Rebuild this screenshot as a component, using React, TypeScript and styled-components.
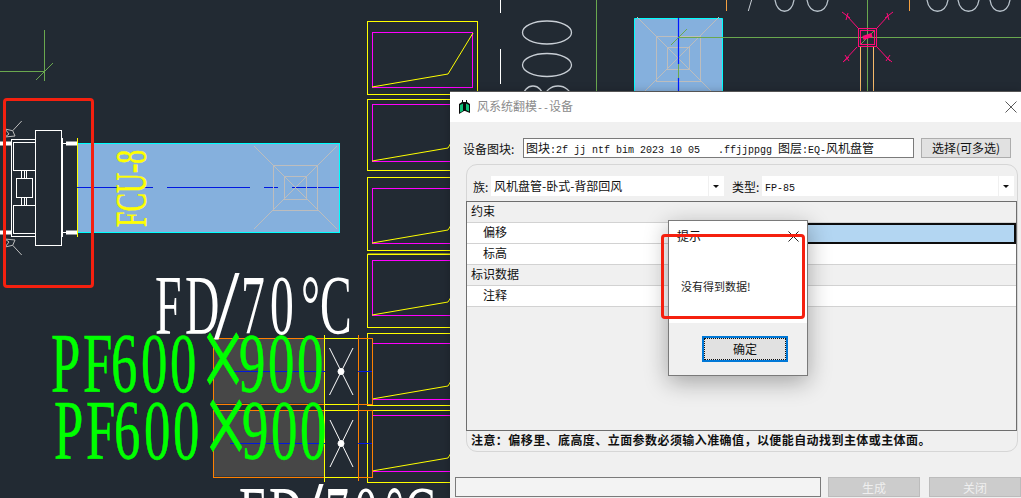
import React from "react";
import styled, { createGlobalStyle } from "styled-components";

const CJK = `"Noto Sans CJK SC", "Liberation Sans", sans-serif`;

const Global = createGlobalStyle`
  html, body { margin: 0; padding: 0; background: #222a33; overflow: hidden; }
  body { font-family: ${CJK}; font-size: 12px; color: #111; }
`;

const Stage = styled.div`
  position: relative;
  width: 1021px;
  height: 498px;
  overflow: hidden;
  background: #222a33;
`;
const Canvas = styled.svg`
  position: absolute;
  inset: 0;
  display: block;
`;
const Win = styled.div`
  position: absolute;
  left: 450px;
  top: 92px;
  width: 571px;
  height: 406px;
  background: #f0f0f0;
  overflow: hidden;
  box-shadow: 0 -1px 0 #555, 0 0 9px rgba(0, 0, 0, 0.25);
`;
const TitleBar = styled.div`
  display: flex;
  align-items: center;
  height: 30px;
  padding: 0 4px 0 9px;
  background: #fff;
`;
const Title = styled.span`
  margin-left: 7px;
  flex: 1;
  color: #8c8c8c;
  font-size: 12px;
  line-height: 30px;
  white-space: pre;
`;
const CloseMark = styled.svg<{ $size: number }>`
  width: ${(p) => p.$size}px;
  height: ${(p) => p.$size}px;
  display: block;
  flex: none;
`;
const DeviceRow = styled.div`
  display: flex;
  align-items: center;
  height: 20px;
  margin-top: 16px;
  padding-left: 13px;
`;
const FieldLabel = styled.span`
  width: 60px;
  flex: none;
  white-space: pre;
  line-height: 19px;
`;
const Sunken = styled.div`
  box-sizing: border-box;
  width: 391px;
  flex: none;
  height: 20px;
  padding-left: 2px;
  border: 1px solid #7a7a7a;
  background: #fff;
  line-height: 17px;
  white-space: pre;
  overflow: hidden;
`;
const Mono = styled.span`
  font-family: "Liberation Mono", monospace;
  font-size: 10px;
`;
const PickButton = styled.div`
  box-sizing: border-box;
  width: 90px;
  flex: none;
  height: 20px;
  margin-left: 7px;
  border: 1px solid #adadad;
  background: #e1e1e1;
  text-align: center;
  line-height: 17px;
`;
const Group = styled.div`
  box-sizing: border-box;
  width: 552px;
  height: 288px;
  margin: 6px 0 0 16px;
  border: 1px solid #d6d6d6;
  border-radius: 11px;
`;
const ComboRow = styled.div`
  display: flex;
  align-items: center;
  height: 20px;
  margin-top: 11px;
  padding-left: 6px;
`;
const ComboLabel = styled.span<{ $w: number }>`
  width: ${(p) => p.$w}px;
  flex: none;
  line-height: 19px;
`;
const Combo = styled.div<{ $w: number; $gap: number }>`
  position: relative;
  box-sizing: border-box;
  width: ${(p) => p.$w}px;
  flex: none;
  height: 20px;
  margin-right: ${(p) => p.$gap}px;
  padding-left: 3px;
  background: #fff;
  line-height: 19px;
  white-space: pre;
  &::after {
    content: "";
    position: absolute;
    right: 5px;
    top: 9px;
    border-left: 3px solid transparent;
    border-right: 3px solid transparent;
    border-top: 3px solid #111;
  }
  &::before {
    content: "";
    position: absolute;
    right: 15px;
    top: 0;
    bottom: 0;
    width: 1px;
    background: #f0f0f0;
  }
`;
const Grid = styled.div`
  box-sizing: border-box;
  width: 551px;
  height: 230px;
  margin: 5px 0 0 -1px;
  border: 1px solid #6e6e6e;
`;
const Row = styled.div<{ $section?: boolean }>`
  display: grid;
  grid-template-columns: 210px 1fr;
  box-sizing: border-box;
  height: 21px;
  border-bottom: 1px solid #d2d2d2;
  background: ${(p) => (p.$section ? "#f0f0f0" : "#fff")};
`;
const RowName = styled.div<{ $section?: boolean }>`
  padding-left: ${(p) => (p.$section ? 4 : 16)}px;
  line-height: 18px;
`;
const RowValue = styled.div<{ $selected?: boolean }>`
  box-sizing: border-box;
  height: ${(p) => (p.$selected ? "21px" : "auto")};
  border: ${(p) => (p.$selected ? "2px solid #0c0c0c" : "none")};
  background: ${(p) => (p.$selected ? "#b3d6f2" : "transparent")};
`;
const Note = styled.div`
  height: 21px;
  padding-left: 4px;
  font-weight: 700;
  line-height: 18px;
  letter-spacing: 0.43px;
  white-space: pre;
`;
const Footer = styled.div`
  display: flex;
  align-items: stretch;
  height: 20px;
  margin-top: 25px;
  padding-left: 5px;
`;
const Status = styled.div`
  box-sizing: border-box;
  width: 366px;
  flex: none;
  margin-right: 7px;
  border: 1px solid #7a7a7a;
  background: #f3f3f3;
`;
const Disabled = styled.div`
  box-sizing: border-box;
  flex: none;
  width: 92px;
  margin-right: 9px;
  border: 1px solid #bcbcbc;
  background: #cccccc;
  color: #efefef;
  text-align: center;
  line-height: 19px;
`;
const MsgBox = styled.div`
  position: absolute;
  left: 668px;
  top: 220px;
  box-sizing: border-box;
  width: 140px;
  height: 156px;
  display: flex;
  flex-direction: column;
  border: 1px solid #7a7a7a;
  background: #f0f0f0;
  box-shadow: 0 6px 22px rgba(0, 0, 0, 0.32);
`;
const MsgBody = styled.div`
  height: 102px;
  flex: none;
  background: #fff;
`;
const MsgTitle = styled.div`
  display: flex;
  align-items: center;
  justify-content: space-between;
  height: 30px;
  padding: 0 8px;
  line-height: 30px;
`;
const MsgText = styled.div`
  margin-top: 25px;
  padding-left: 12px;
  font-size: 11px;
  line-height: 20px;
  color: #222;
`;
const OkButton = styled.div`
  box-sizing: border-box;
  width: 86px;
  height: 26px;
  margin: 13px 0 0 33px;
  border: 2px solid #0078d7;
  background: #e1e1e1;
  outline: 1px dotted #111;
  outline-offset: -3px;
  text-align: center;
  line-height: 22px;
`;
const RedMark = styled.div<{ $x: number; $y: number; $w: number; $h: number }>`
  position: absolute;
  left: ${(p) => p.$x}px;
  top: ${(p) => p.$y}px;
  width: ${(p) => p.$w}px;
  height: ${(p) => p.$h}px;
  box-sizing: border-box;
  border: 3px solid #f5200f;
  border-radius: 4px;
`;

const X = ({ size, color }: { size: number; color: string }) => (
  <CloseMark $size={size} viewBox="0 0 12 12">
    <path d="M0.5 0.5 L11.5 11.5 M11.5 0.5 L0.5 11.5" stroke={color} strokeWidth="1" fill="none" />
  </CloseMark>
);

const AppIcon = () => (
  <svg width="11" height="15" viewBox="0 0 11 15" style={{ flex: "none" }}>
    <path d="M3 2 V0 H4 V2 H7 V0 H8 V2 L11 4 V13 L6 11 L5 11 L0 14 V4 Z" fill="#0a0a0a" />
    <path d="M1 5 L4 3.5 V11 L1 12.5 Z" fill="#10c078" />
    <path d="M7 3.5 L10 5 V11.5 L7 10 Z" fill="#10c078" />
  </svg>
);

const Y = "#ffff00";
const M = "#ff00ff";
const O = "#ff8000";
const G = "#6aa84f";
const B = "#0018e0";
const GR = "#bdbdbd";
const P = "#ff0a78";
const W = "#ffffff";

const CadText = styled.text`
  font-family: "Liberation Serif", serif;
`;

/* One run of stretched CAD lettering: every glyph has its own x in page pixels. */
const Lettering = ({
  base,
  squeeze,
  fill,
  stroke,
  size = 85,
  t,
  x,
}: {
  base: number;
  squeeze: number;
  fill: string;
  stroke?: number;
  size?: number;
  t: string;
  x: number[];
}) => (
  <CadText
    transform={`translate(0 ${base}) scale(${squeeze} 1)`}
    x={x.map((v) => (v / squeeze).toFixed(1)).join(" ")}
    y="0"
    fontSize={size}
    fill={fill}
    stroke={stroke ? fill : "none"}
    strokeWidth={stroke ?? 0}
  >
    {t}
  </CadText>
);

const panels: [number, number, number, number, number][] = [
  [21, 94, 32, 87, 74],
  [99, 170, 104, 161, 148],
  [177, 250, 188, 243, 230],
  [254, 327, 260, 315, 302],
  [333, 405, 343, 399, 386],
  [410, 482, 415, 471, 458],
];

const FdLabel = ({ dx, base }: { dx: number; base: number }) => (
  <>
    <Lettering base={base} squeeze={0.56} fill={W} t="FD" x={[155 + dx, 185 + dx]} />
    <Lettering base={base + 4} squeeze={0.92} size={100} fill={W} t="/" x={[214 + dx]} />
    <Lettering base={base} squeeze={0.56} fill={W} t="70" x={[241 + dx, 270 + dx]} />
    <Lettering base={base} squeeze={0.56} fill={W} t="°C" x={[301 + dx, 320 + dx]} />
  </>
);

const GreenLabel = ({ dx, base }: { dx: number; base: number }) => (
  <>
    <Lettering base={base} squeeze={0.62} stroke={0.7} fill="#00ff00" t="PF600" x={[51 + dx, 83 + dx, 111 + dx, 141 + dx, 170 + dx]} />
    <Lettering base={base + 9} squeeze={0.62} stroke={0.7} size={126} fill="#00ff00" t="×" x={[201 + dx]} />
    <Lettering base={base} squeeze={0.62} stroke={0.7} fill="#00ff00" t="900" x={[239 + dx, 268 + dx, 297 + dx]} />
  </>
);

const Cad = () => (
  <Canvas width="1021" height="498" viewBox="0 0 1021 498">
    <g fill="none" strokeWidth="1">
      {/* green cross */}
      <path d="M44.5 30 V81 M0 71.5 H44.5 M36 80 L53 63" stroke={G} />
      {/* fan coil body */}
      <rect x="77.5" y="143.5" width="262" height="89" fill="#85b0dd" stroke="#00ffff" />
      <path d="M77.5 138 V237" stroke={Y} />
      <path d="M77 187.5 H125 M139 187.5 H153 M167 187.5 H250 M264 187.5 H278 M292 187.5 H339" stroke={B} />
      <g stroke={GR}>
        <rect x="273.5" y="165.5" width="44" height="45" />
        <rect x="284.5" y="176.5" width="22" height="23" />
        <path d="M254 146 L337 229 M337 146 L254 229" />
      </g>
      {/* device */}
      <g stroke={W}>
        <rect x="35.5" y="130.5" width="26" height="115" />
        <rect x="11.5" y="139.5" width="24" height="97" />
        <rect x="13.5" y="142.5" width="22" height="28" />
        <rect x="13.5" y="205.5" width="22" height="28" />
        <rect x="16.5" y="178.5" width="16" height="19" />
        <path d="M21.5 171 V178 M24.5 171 V178 M26.5 171 V178 M21.5 198 V205 M24.5 198 V205 M26.5 198 V205" />
        <path d="M62.5 138 V237 M62 143.5 H66 M62 232.5 H66" />
        <path d="M0 143.5 H11 M0 232.5 H11 M66 143.5 H77 M66 232.5 H77" strokeWidth="4" />
      </g>
      <g stroke={GR}>
        <path d="M21.7 121 L12.7 130.7 L5 129 L9 134 L5 137 L15 136 L12.7 130.7" />
        <path d="M21.7 255 L12.7 245.3 L5 247 L9 242 L5 239 L15 240 L12.7 245.3" />
      </g>
      {/* column of panels */}
      {panels.map(([a, b, c, d, e], i) => (
        <g key={i}>
          <rect x="367.5" y={a + 0.5} width="110" height={b - a} stroke={Y} />
          <rect x="372.5" y={c + 0.5} width="100" height={d - c} stroke={M} />
          <path d={`M372 ${d} L448 ${e} L473 ${c + 1}`} stroke={Y} />
        </g>
      ))}
      <path d="M367.5 94.5 H450 M367.5 254 H450" stroke={Y} />
      {/* top part */}
      <path d="M500.5 0 V13 M500.5 49 V84" stroke={W} />
      <g stroke="#c9cfd6" strokeWidth="1.3">
        <ellipse cx="547" cy="32.5" rx="24.5" ry="11.5" />
        <ellipse cx="547" cy="65" rx="24.5" ry="11.5" />
        <ellipse cx="533" cy="97" rx="10" ry="11" />
        <ellipse cx="558" cy="97" rx="13" ry="11" />
      </g>
      <path d="M596.5 0 V92" stroke={G} />
      <rect x="634.5" y="18.5" width="88" height="76" fill="#85b0dd" stroke="none" />
      <path d="M634.5 92 V18.5 H722.5 V92" stroke="#00ffff" />
      <g stroke={GR}>
        <rect x="656.5" y="36.5" width="44" height="45" />
        <rect x="667.5" y="47.5" width="22" height="22" />
        <path d="M637 17 L712 92 M719 17 L644 92" />
      </g>
      <path d="M678.5 18 V64 M678.5 78 V92" stroke="#0018ff" strokeWidth="1.2" />
      <path d="M678.5 64 V78 M671 45 L687 29" stroke={G} />
      <path d="M678 37.5 H1021 M867.5 0 V92" stroke={G} />
      <path d="M860.5 47 V92 M873.5 47 V92" stroke="#f5b96a" />
      <path d="M867.5 47 V92 M861 44 L875 30" stroke={G} />
      <g stroke={P}>
        <rect x="858.5" y="28.5" width="18" height="18" />
        <rect x="860.5" y="30.5" width="14" height="14" />
        <path d="M858 28 L847 16 M877 28 L888 16 M857 47 L844 61 M877 47 L890 61" />
        <path d="M842 12 L850 18 M848 13 L846 20 M893 12 L885 18 M887 13 L889 20 M843 62 L849 57 M845 55 L849 61 M892 62 L886 57 M890 55 L886 61" />
        <path d="M863 38 L872 35" strokeWidth="4" />
      </g>
      <path d="M726.5 0 V11 M909.5 0 V11" stroke="#f5a040" />
      <path d="M751.6 0 L748.3 11" stroke="#c9cfd6" />
      <g stroke="#b9c3cc" strokeWidth="1.3">
        <path d="M775 0 C777 15 792 15 794 0 M807 0 C809 15 826 15 828 0 M927 0 C929 15 946 15 948 0 M958 0 C960 15 977 15 979 0 M990 0 C992 15 1008 15 1010 0" />
      </g>
      {/* ducts and dampers */}
      <rect x="213.5" y="338.5" width="111" height="65" fill="#474747" stroke="none" />
      <rect x="213.5" y="410.5" width="111" height="66" fill="#474747" stroke="none" />
      <rect x="213.5" y="338.5" width="159" height="66" stroke={O} />
      <rect x="213.5" y="410.5" width="159" height="67" stroke={O} />
      <path d="M324.5 335 V482 M324 338.5 H358 M324 404.5 H358 M324 410.5 H358 M324 477.5 H358" stroke={Y} />
      <path d="M358.5 335 V481" stroke={O} />
      <path d="M230 371.5 H325 M358 371.5 H372 M230 443.5 H325 M358 443.5 H372" stroke={B} />
      <g stroke={W}>
        <path d="M329.5 348 L353 395 M353 348 L329.5 395 M330 420 L353 467 M353 420 L330 467" />
        <circle cx="341" cy="371.5" r="3" fill={W} />
        <circle cx="341" cy="443.5" r="3" fill={W} />
      </g>
    </g>
    {/* texts */}
    <CadText
      x="0"
      y="0"
      fontSize="44"
      fill={Y}
      stroke={Y}
      strokeWidth="0.6"
      textLength="77"
      lengthAdjust="spacingAndGlyphs"
      transform="translate(146 227) rotate(-90)"
    >
      FCU-8
    </CadText>
    <FdLabel dx={0} base={334} />
    <GreenLabel dx={0} base={392} />
    <GreenLabel dx={3} base={459} />
    <FdLabel dx={84} base={545} />
  </Canvas>
);

const rows = [
  { name: "约束", section: true },
  { name: "偏移", selected: true },
  { name: "标高" },
  { name: "标识数据", section: true },
  { name: "注释" },
];

export default function App() {
  return (
    <Stage>
      <Global />
      <Cad />
      <RedMark $x={3} $y={98} $w={91} $h={190} />
      <Win>
        <TitleBar>
          <AppIcon />
          <Title>
            风系统翻模<Mono>--</Mono>设备
          </Title>
          <X size={12} color="#5a5a5a" />
        </TitleBar>
        <DeviceRow>
          <FieldLabel>设备图块:</FieldLabel>
          <Sunken>
            图块<Mono>:2f jj ntf bim 2023 10 05   .ffjjppgg </Mono>图层<Mono>:EQ-</Mono>风机盘管
          </Sunken>
          <PickButton>选择(可多选)</PickButton>
        </DeviceRow>
        <Group>
          <ComboRow>
            <ComboLabel $w={18}>族:</ComboLabel>
            <Combo $w={233} $gap={8}>
              风机盘管-卧式-背部回风
            </Combo>
            <ComboLabel $w={30}>类型:</ComboLabel>
            <Combo $w={252} $gap={0}>
              <Mono>FP-85</Mono>
            </Combo>
          </ComboRow>
          <Grid>
            {rows.map((r) => (
              <Row key={r.name} $section={r.section}>
                <RowName $section={r.section}>{r.name}</RowName>
                <RowValue $selected={r.selected} />
              </Row>
            ))}
          </Grid>
          <Note>{"注意\uFF1A偏移里、底高度、立面参数必须输入准确值\uFF0C以便能自动找到主体或主体面。"}</Note>
        </Group>
        <Footer>
          <Status />
          <Disabled>生成</Disabled>
          <Disabled>关闭</Disabled>
        </Footer>
      </Win>
      <MsgBox>
        <MsgBody>
          <MsgTitle>
            提示
            <X size={11} color="#111" />
          </MsgTitle>
          <MsgText>没有得到数据!</MsgText>
        </MsgBody>
        <OkButton>确定</OkButton>
      </MsgBox>
      <RedMark $x={661} $y={234} $w={144} $h={85} />
    </Stage>
  );
}
